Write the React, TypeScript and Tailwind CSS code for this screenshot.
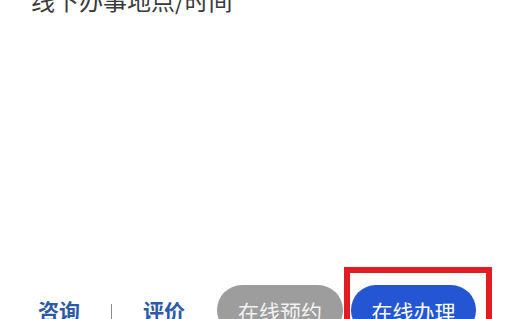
export default function App() {
  return (
    <div
      className="w-[508px] h-[319px] overflow-hidden bg-white flex flex-col"
      style={{ fontFamily: '"Noto Sans CJK SC", "Noto Sans", sans-serif' }}
    >
      <p className="pl-[31px] mt-[-15px] text-[24px] leading-[30px] text-[#3a3a3a]">
        线下办事地点/时间
      </p>

      <div className="mt-[252px] flex items-start shrink-0">
        <span className="ml-[38px] mt-[33px] text-[21px] leading-[21px] font-bold text-[#2b5aa6]">
          咨询
        </span>
        <span className="ml-[31px] mt-[37px] w-[1px] h-[18px] bg-[#8a8a8a]" />
        <span className="ml-[31px] mt-[33px] text-[21px] leading-[21px] font-bold text-[#2b5aa6]">
          评价
        </span>
        <button className="ml-[32px] mt-[18px] w-[126px] h-[50px] rounded-full bg-[#9d9d9d] text-[#f2f2f2] text-[21px] leading-[21px] pt-[16px] flex justify-center items-start">
          在线预约
        </button>
        <div className="ml-[1px] border-[6px] border-[#e31b23] pt-[12px] pl-[1px] pr-[10px] h-[70px]">
          <button className="w-[125px] h-[50px] rounded-full bg-[#2456d4] text-white text-[21px] leading-[21px] pt-[16px] flex justify-center items-start">
            在线办理
          </button>
        </div>
      </div>
    </div>
  );
}
